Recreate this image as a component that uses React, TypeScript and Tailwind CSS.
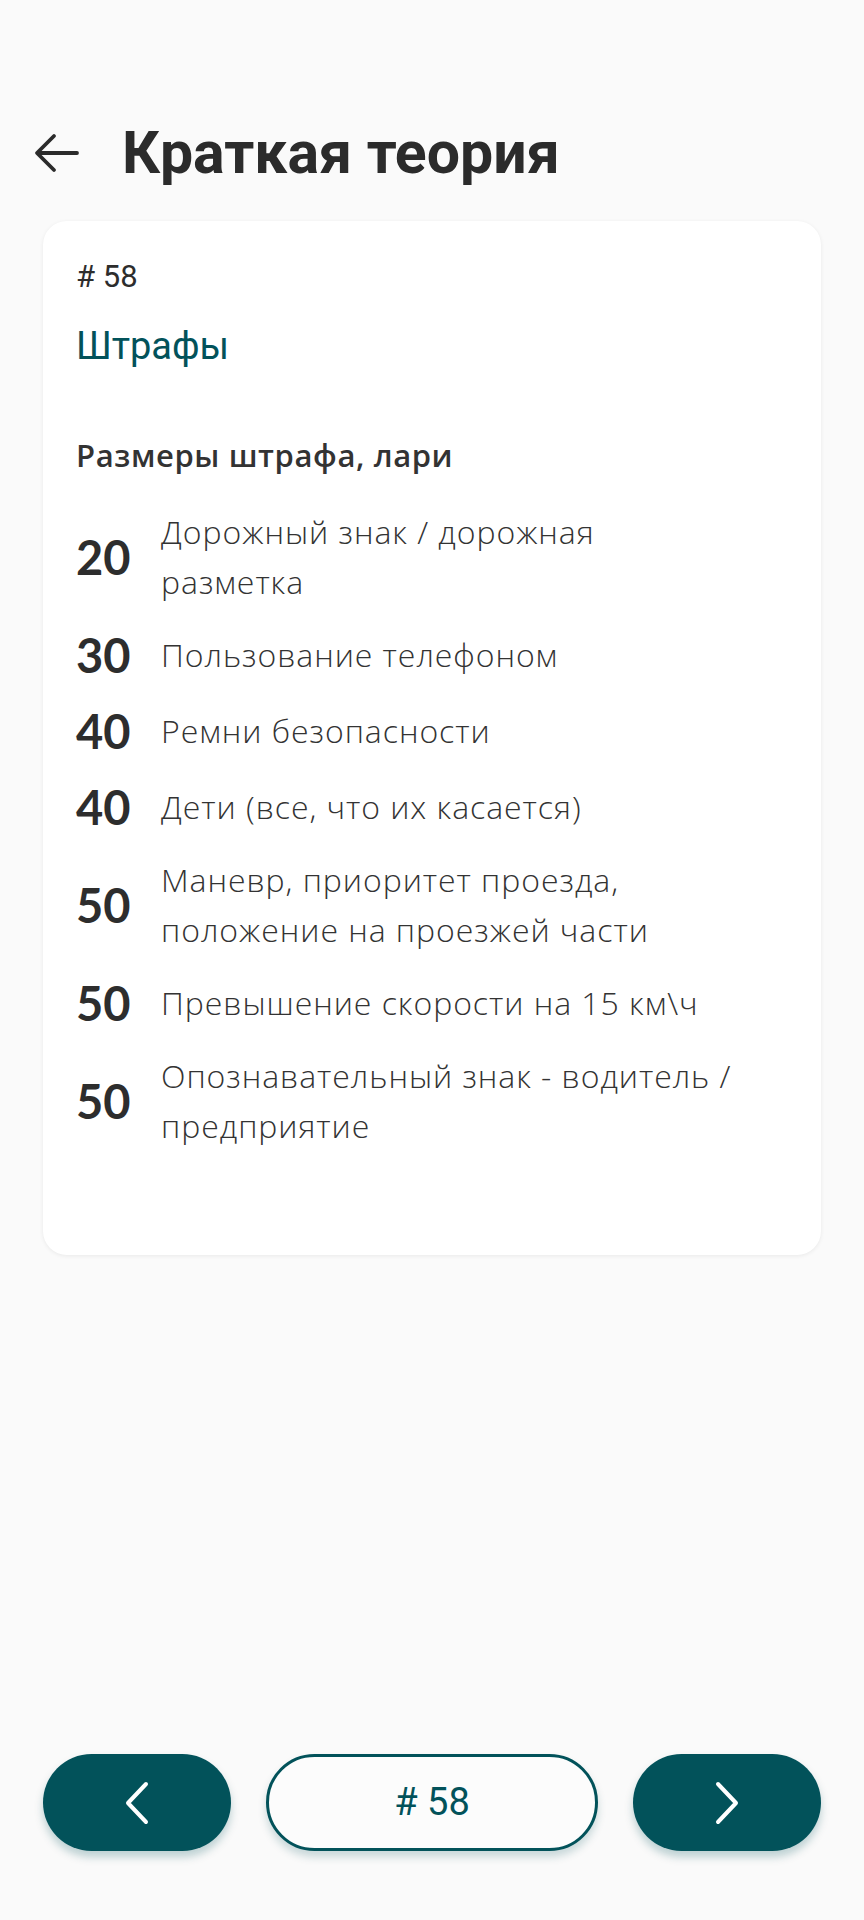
import React from 'react';

type Fine = {
  amount: string;
  lines: string[];
};

const fines: Fine[] = [
  { amount: '20', lines: ['Дорожный знак / дорожная', 'разметка'] },
  { amount: '30', lines: ['Пользование телефоном'] },
  { amount: '40', lines: ['Ремни безопасности'] },
  { amount: '40', lines: ['Дети (все, что их касается)'] },
  { amount: '50', lines: ['Маневр, приоритет проезда,', 'положение на проезжей части'] },
  { amount: '50', lines: ['Превышение скорости на 15 км\\ч'] },
  { amount: '50', lines: ['Опознавательный знак - водитель /', 'предприятие'] },
];

const roboto = "font-['Roboto','Liberation_Sans',sans-serif]";
const body = "font-['Open_Sans','Noto_Sans',sans-serif]";

const BackArrow = () => (
  <svg width="46" height="40" viewBox="0 0 46 40" fill="none">
    <path
      d="M43 20H4M20 3L3 20L20 37"
      stroke="#2b2b2b"
      strokeWidth="3.8"
      strokeLinecap="round"
      strokeLinejoin="round"
    />
  </svg>
);

const Chevron = ({ dir }: { dir: 'left' | 'right' }) => (
  <svg width="26" height="44" viewBox="0 0 26 44" fill="none">
    <path
      d={dir === 'left' ? 'M22 3L4 22L22 41' : 'M4 3L22 22L4 41'}
      stroke="#ffffff"
      strokeWidth="4"
      strokeLinecap="round"
      strokeLinejoin="round"
    />
  </svg>
);

const App = () => {
  return (
    <div className="h-[1920px] flex flex-col bg-[#fafafa] text-[#2d2d2d]">
      {/* header */}
      <header className="mt-[112px] h-[82px] flex items-center pl-[34px]">
        <BackArrow />
        <h1 className={`${roboto} ml-[42px] text-[59px] leading-[68px] font-bold text-[#2b2b2b]`}>
          Краткая теория
        </h1>
      </header>

      {/* card */}
      <div className="mx-[43px] mt-[27px] rounded-[24px] bg-white shadow-[0_1px_4px_rgba(0,0,0,0.07)] px-[33px] pt-[38px] pb-[104px]">
        <div className={`${roboto} text-[31px] leading-[36px] text-[#2d2d2d]`}># 58</div>
        <div className={`${roboto} mt-[28px] text-[38px] leading-[46px] text-[#02525a]`}>Штрафы</div>
        <div className={`${body} mt-[66px] text-[31px] leading-[40px] tracking-[0.6px] font-semibold text-[#333333]`}>
          Размеры штрафа, лари
        </div>

        <ul className="mt-[32px] flex flex-col gap-[20px]">
          {fines.map((f, i) => (
            <li key={i} className="flex items-center min-h-[56px]">
              <span
                className={`w-[85px] shrink-0 font-['Lato','Open_Sans',sans-serif] text-[47px] leading-[56px] font-bold text-[#2d2d2d]`}
              >
                {f.amount}
              </span>
              <div className={`${body} text-[32px] leading-[50px] tracking-[0.95px] font-light text-[#333333]`}>
                {f.lines.map((l) => (
                  <div key={l} className="whitespace-nowrap">
                    {l}
                  </div>
                ))}
              </div>
            </li>
          ))}
        </ul>
      </div>

      {/* bottom navigation */}
      <div className="mt-auto mb-[69px] px-[43px] flex gap-[35px]">
        <button
          type="button"
          className="w-[188px] h-[97px] shrink-0 rounded-full bg-[#02525a] flex items-center justify-center shadow-[0_6px_8px_rgba(2,82,90,0.25)]"
        >
          <Chevron dir="left" />
        </button>
        <button
          type="button"
          className={`${roboto} flex-1 h-[97px] rounded-full border-[3px] border-[#02525a] bg-[#fcfcfc] text-[38px] text-[#02525a] flex items-center justify-center shadow-[0_6px_8px_rgba(2,82,90,0.2)]`}
        >
          # 58
        </button>
        <button
          type="button"
          className="w-[188px] h-[97px] shrink-0 rounded-full bg-[#02525a] flex items-center justify-center shadow-[0_6px_8px_rgba(2,82,90,0.25)]"
        >
          <Chevron dir="right" />
        </button>
      </div>
    </div>
  );
};

export default App;
